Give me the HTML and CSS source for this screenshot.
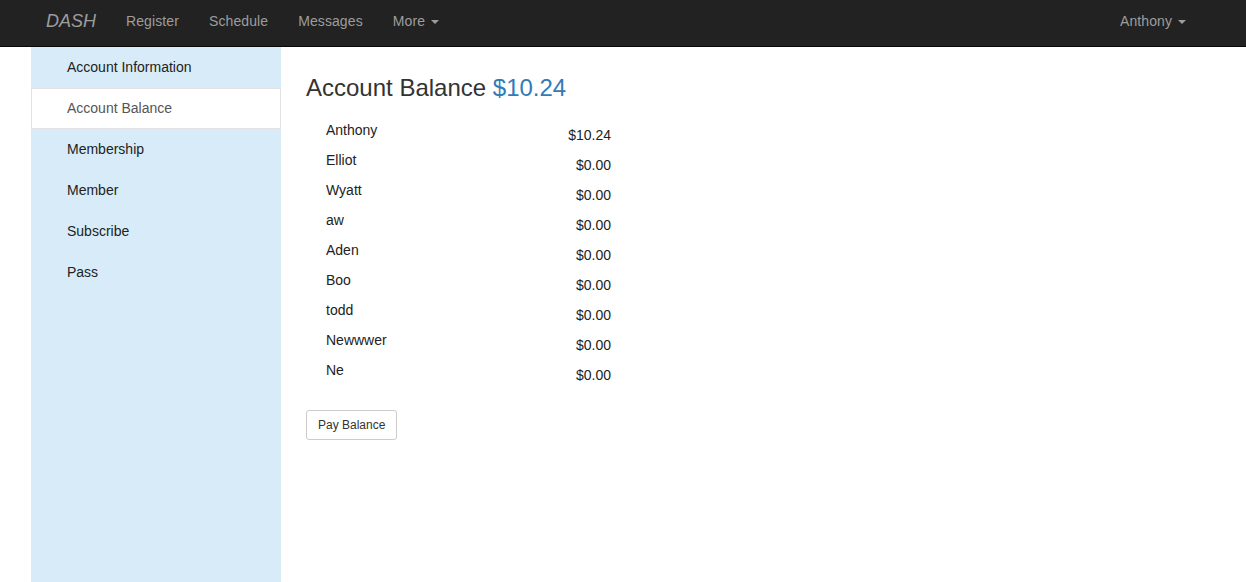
FILE: index.html
```html
<!DOCTYPE html>
<html>
<head>
<meta charset="utf-8">
<title>DASH - Account Balance</title>
<link rel="stylesheet" href="styles.css">
</head>
<body>
<nav class="navbar">
  <div class="nav-left">
    <a class="brand" href="#">DASH</a>
    <a class="nav-link" href="#">Register</a>
    <a class="nav-link" href="#">Schedule</a>
    <a class="nav-link" href="#">Messages</a>
    <a class="nav-link" href="#">More <span class="caret"></span></a>
  </div>
  <div class="nav-right">
    <a class="nav-link" href="#">Anthony <span class="caret"></span></a>
  </div>
</nav>
<div class="page">
  <aside class="sidebar">
    <a class="side-item" href="#">Account Information</a>
    <a class="side-item active" href="#">Account Balance</a>
    <a class="side-item" href="#">Membership</a>
    <a class="side-item" href="#">Member</a>
    <a class="side-item" href="#">Subscribe</a>
    <a class="side-item" href="#">Pass</a>
  </aside>
  <main class="main">
    <h3 class="title">Account Balance <span class="amount-total">$10.24</span></h3>
    <div class="balances">
      <div class="row"><span class="name">Anthony</span><span class="amt">$10.24</span></div>
      <div class="row"><span class="name">Elliot</span><span class="amt">$0.00</span></div>
      <div class="row"><span class="name">Wyatt</span><span class="amt">$0.00</span></div>
      <div class="row"><span class="name">aw</span><span class="amt">$0.00</span></div>
      <div class="row"><span class="name">Aden</span><span class="amt">$0.00</span></div>
      <div class="row"><span class="name">Boo</span><span class="amt">$0.00</span></div>
      <div class="row"><span class="name">todd</span><span class="amt">$0.00</span></div>
      <div class="row"><span class="name">Newwwer</span><span class="amt">$0.00</span></div>
      <div class="row"><span class="name">Ne</span><span class="amt">$0.00</span></div>
    </div>
    <button class="btn" type="button">Pay Balance</button>
  </main>
</div>
</body>
</html>
```
FILE: styles.css
```css
* { box-sizing: border-box; }
html, body { margin: 0; padding: 0; }
body {
  font-family: "Liberation Sans", Arial, Helvetica, sans-serif;
  font-size: 14px;
  line-height: 20px;
  color: #333;
  background: #fff;
}
a { text-decoration: none; }

.navbar {
  display: flex;
  justify-content: space-between;
  height: 47px;
  background: #222;
  border-bottom: 1px solid #080808;
  padding: 0 45px 0 31px;
}
.nav-left, .nav-right { display: flex; }
.brand {
  padding: 10px 15px;
  font-size: 18px;
  font-style: italic;
  line-height: 22px;
  color: #9d9d9d;
}
.nav-link {
  padding: 11px 15px;
  color: #9d9d9d;
  line-height: 20px;
  letter-spacing: 0.1px;
}
.caret {
  display: inline-block;
  width: 0;
  height: 0;
  margin-left: 2px;
  vertical-align: middle;
  border-top: 4px solid #9d9d9d;
  border-left: 4px solid transparent;
  border-right: 4px solid transparent;
}

.page {
  display: flex;
  min-height: calc(100vh - 47px);
}
.sidebar {
  width: 250px;
  margin-left: 31px;
  background: #d7ecf8;
  display: flex;
  flex-direction: column;
}
.side-item {
  display: block;
  height: 41px;
  padding: 9px 15px 11px 35px;
  color: #222;
  border: 1px solid transparent;
  line-height: 20px;
}
.side-item.active {
  background: #fff;
  color: #555;
  border-color: #e2e2e2;
}

.main {
  flex: 1;
  padding: 0 25px;
}
.title {
  margin: 28px 0 0;
  font-size: 24px;
  font-weight: 400;
  line-height: 26px;
  color: #333;
}
.amount-total { color: #337ab7; }
.balances {
  width: 305px;
  margin-top: 19px;
}
.row {
  display: flex;
  justify-content: space-between;
  height: 30px;
}
.name {
  padding-left: 20px;
  line-height: 20px;
  color: #222;
}
.amt {
  padding-top: 5px;
  line-height: 20px;
  color: #222;
}
.btn {
  margin-top: 20px;
  font-family: "Liberation Sans", Arial, Helvetica, sans-serif;
  font-size: 12px;
  line-height: 18px;
  padding: 5px 11px;
  height: 30px;
  background: #fff;
  color: #333;
  border: 1px solid #ccc;
  border-radius: 3px;
}
```
